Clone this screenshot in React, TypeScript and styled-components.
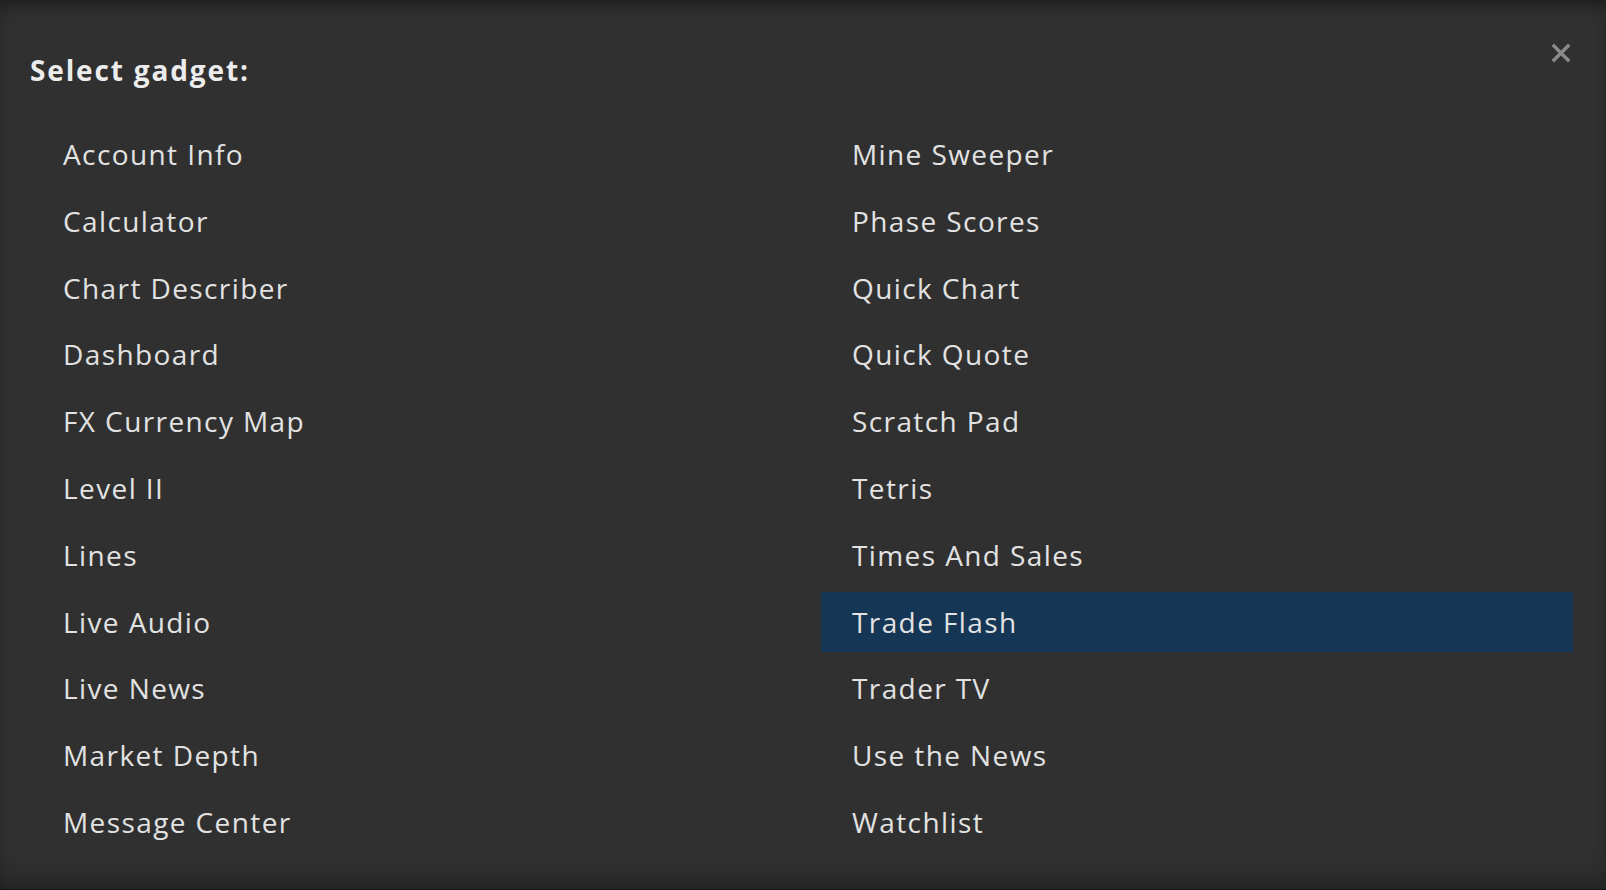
import React from "react";
import styled, { createGlobalStyle } from "styled-components";

const GlobalStyle = createGlobalStyle`
  html, body { margin: 0; padding: 0; background: #303030; }
  body { font-family: "Open Sans", "Noto Sans", sans-serif; }
`;

const Dialog = styled.div`
  position: relative;
  width: 1606px;
  height: 890px;
  box-sizing: border-box;
  background: #303030;
  box-shadow: inset 0 14px 18px -10px rgba(0, 0, 0, 0.45),
    inset 0 -30px 30px -24px rgba(0, 0, 0, 0.35),
    inset 0 -2px 1px -1px rgba(0, 0, 0, 0.4);
  padding: 52px 33px 0 30px;
  color: #e6e6e6;
`;

const Title = styled.h2`
  margin: 0;
  font-size: 28px;
  font-weight: 700;
  line-height: 36px;
  color: #ececec;
  letter-spacing: 1.85px;
`;

const CloseButton = styled.button`
  position: absolute;
  top: 40px;
  right: 32px;
  width: 26px;
  height: 26px;
  padding: 0;
  border: none;
  background: transparent;
  display: flex;
  align-items: center;
  justify-content: center;
  cursor: pointer;
`;

const Columns = styled.div`
  display: grid;
  grid-template-columns: 752px 752px;
  column-gap: 37px;
  margin-top: 36px;
  margin-left: 2px;
`;

const List = styled.ul`
  list-style: none;
  margin: 0;
  padding: 0;
  display: flex;
  flex-direction: column;
  gap: 6.8px;
`;

const Item = styled.li<{ $active?: boolean }>`
  height: 60px;
  display: flex;
  align-items: center;
  padding-left: 31px;
  font-size: 28px;
  color: #e2e2e2;
  background: ${(p) => (p.$active ? "#153654" : "transparent")};
  letter-spacing: 1.4px;
`;

const left = [
  "Account Info",
  "Calculator",
  "Chart Describer",
  "Dashboard",
  "FX Currency Map",
  "Level II",
  "Lines",
  "Live Audio",
  "Live News",
  "Market Depth",
  "Message Center",
];

const right = [
  "Mine Sweeper",
  "Phase Scores",
  "Quick Chart",
  "Quick Quote",
  "Scratch Pad",
  "Tetris",
  "Times And Sales",
  "Trade Flash",
  "Trader TV",
  "Use the News",
  "Watchlist",
];

export default function App() {
  return (
    <>
      <GlobalStyle />
      <Dialog>
        <Title>Select gadget:</Title>
        <CloseButton aria-label="Close">
          <svg width="20" height="20" viewBox="0 0 20 20">
            <path d="M3 3 L17 17 M17 3 L3 17" stroke="#8a8a8a" strokeWidth="3.4" strokeLinecap="square" />
          </svg>
        </CloseButton>
        <Columns>
          <List>
            {left.map((t) => (
              <Item key={t}>{t}</Item>
            ))}
          </List>
          <List>
            {right.map((t) => (
              <Item key={t} $active={t === "Trade Flash"}>
                {t}
              </Item>
            ))}
          </List>
        </Columns>
      </Dialog>
    </>
  );
}
